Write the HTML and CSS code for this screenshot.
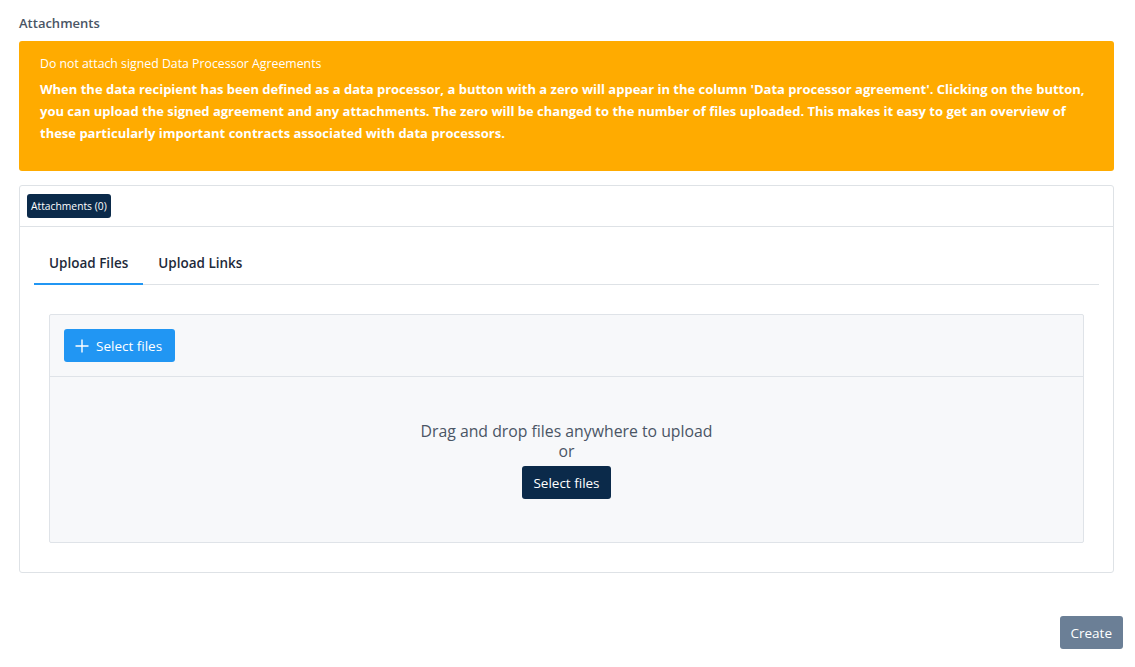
FILE: index.html
```html
<!DOCTYPE html>
<html lang="en">
<head>
  <meta charset="UTF-8">
  <meta name="viewport" content="width=device-width, initial-scale=1.0">
  <title>Attachments</title>
  <link rel="stylesheet" href="styles.css">
</head>
<body>
  <div class="page">
    <div class="section-title">Attachments</div>

    <div class="warning">
      <div class="warning-title">Do not attach signed Data Processor Agreements</div>
      <p class="warning-text">When the data recipient has been defined as a data processor, a button with a zero will appear in the column 'Data processor agreement'. Clicking on the button, you can upload the signed agreement and any attachments. The zero will be changed to the number of files uploaded. This makes it easy to get an overview of these particularly important contracts associated with data processors.</p>
    </div>

    <div class="card">
      <div class="card-header">
        <span class="badge">Attachments (0)</span>
      </div>
      <div class="card-body">
        <div class="tabs">
          <div class="tab active">Upload Files</div>
          <div class="tab">Upload Links</div>
        </div>

        <div class="upload">
          <div class="upload-toolbar">
            <button class="btn btn-blue">
              <svg width="14" height="14" viewBox="0 0 14 14"><path d="M7 0.5v13M0.5 7h13" stroke="#fff" stroke-width="1.4" fill="none"/></svg>
              Select files
            </button>
          </div>
          <div class="dropzone">
            <div class="drop-text">Drag and drop files anywhere to upload</div>
            <div class="drop-or">or</div>
            <button class="btn btn-navy">Select files</button>
          </div>
        </div>
      </div>
    </div>

    <div class="footer">
      <button class="btn btn-create">Create</button>
    </div>
  </div>
</body>
</html>
```

FILE: styles.css
```css
body {
  margin: 0;
  font-family: "Segoe UI", "Open Sans", sans-serif;
  color: #333;
  background: #fff;
}
.page {
  padding: 14px 21px 0 19px;
}
.section-title {
  font-size: 13px;
  font-weight: 600;
  color: #4a5565;
  margin-bottom: 9px;
}
.warning {
  background: #ffab00;
  color: #fff;
  border-radius: 3px;
  padding: 14px 21px 27px;
}
.warning-title {
  font-size: 12.3px;
  margin-bottom: 6px;
}
.warning-text {
  margin: 0;
  font-size: 13px;
  font-weight: 700;
  line-height: 22px;
}
.card {
  margin-top: 14px;
  border: 1px solid #dee2e6;
  border-radius: 3px;
}
.card-header {
  display: flex;
  align-items: center;
  padding: 0 7px;
  height: 40px;
  border-bottom: 1px solid #dee2e6;
}
.badge {
  background: #0b2a4a;
  color: #fff;
  font-size: 10.3px;
  line-height: 24px;
  padding: 0 4px;
  border-radius: 3px;
}
.card-body {
  padding: 14px 14px 29px;
}
.tabs {
  display: flex;
  border-bottom: 1px solid #dee2e6;
  margin-bottom: 29px;
}
.tab {
  font-size: 13.5px;
  font-weight: 600;
  color: #1e2a3a;
  padding: 13px 15px 12px;
  margin-bottom: -1px;
}
.tab.active {
  border-bottom: 2px solid #2196f3;
  padding-bottom: 11px;
}
.upload {
  margin: 0 15px;
  background: #f7f8fa;
  border: 1px solid #dfe3e8;
  border-radius: 2px;
}
.upload-toolbar {
  padding: 14px;
  border-bottom: 1px solid #dfe3e8;
}
.btn {
  font-family: inherit;
  border: none;
  border-radius: 3px;
  color: #fff;
  font-size: 13.5px;
  cursor: pointer;
}
.btn-blue {
  background: #2196f3;
  height: 33px;
  padding: 0 13px 0 11px;
  display: inline-flex;
  align-items: center;
  gap: 7px;
}
.dropzone {
  text-align: center;
  padding: 44px 0 43px;
}
.drop-text {
  font-size: 15.8px;
  color: #4a5565;
  line-height: 20px;
}
.drop-or {
  font-size: 15.8px;
  color: #4a5565;
  line-height: 20px;
  margin-bottom: 5px;
}
.btn-navy {
  background: #0b2a4a;
  height: 33px;
  padding: 0 11px;
}
.footer {
  display: flex;
  justify-content: flex-end;
  margin-top: 43px;
  margin-right: -9px;
}
.btn-create {
  background: #6b7f96;
  height: 33px;
  padding: 0 11px;
  font-size: 13.5px;
}
```
